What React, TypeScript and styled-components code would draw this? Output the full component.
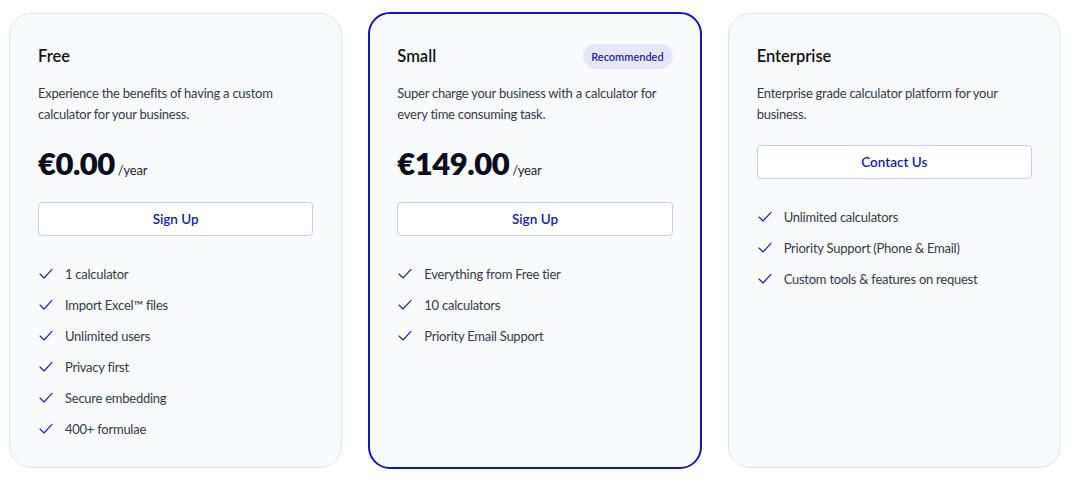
import React from "react";
import styled, { createGlobalStyle } from "styled-components";

const Global = createGlobalStyle`
  html, body { margin: 0; padding: 0; background: #ffffff; }
  body { font-family: Lato, "Noto Sans", sans-serif; -webkit-font-smoothing: antialiased; }
  * { box-sizing: border-box; }
`;

const Page = styled.div`
  width: 1070px;
  height: 478px;
  padding: 12px 9px 9px;
  display: grid;
  grid-template-columns: repeat(3, 1fr);
  gap: 26px;
  align-items: stretch;
  background: #ffffff;
`;

const Card = styled.div<{ $highlight?: boolean }>`
  display: flex;
  flex-direction: column;
  margin-top: ${(p) => (p.$highlight ? "0" : "1px")};
  margin-bottom: ${(p) => (p.$highlight ? "0" : "1px")};
  border-radius: 22px;
  background: #f9fafc;
  border: ${(p) => (p.$highlight ? "2px solid #1616b8" : "1px solid #e4e6eb")};
  padding: ${(p) => (p.$highlight ? "29px 27px 20px" : "29px 28px 20px")};
`;

const Header = styled.div`
  display: flex;
  align-items: center;
  justify-content: space-between;
  height: 27px;
`;

const Title = styled.h3`
  margin: 0;
  font-size: 16.5px;
  font-weight: 600;
  color: #111318;
  line-height: 27px;
`;

const Badge = styled.span`
  display: inline-flex;
  align-items: center;
  height: 25px;
  padding: 0 9px 0 8px;
  margin-top: -1px;
  border-radius: 999px;
  background: #e7e8f7;
  color: #1f1fa6;
  font-size: 11px;
  font-weight: 600;
`;

const Desc = styled.p`
  margin: 13px 0 0;
  font-size: 13px;
  letter-spacing: -0.25px;
  line-height: 21px;
  color: #353a45;
`;

const PriceRow = styled.div`
  margin-top: 18px;
  display: flex;
  align-items: baseline;
  gap: 3px;
  height: 40px;
`;

const Price = styled.span`
  font-size: 31px;
  font-weight: 800;
  color: #0b0c1c;
  letter-spacing: -0.5px;
  line-height: 40px;
`;

const Per = styled.span`
  font-size: 13px;
  letter-spacing: -0.2px;
  color: #22252e;
`;

const Button = styled.button<{ $gap: number }>`
  margin-top: ${(p) => p.$gap}px;
  height: 34px;
  width: 100%;
  border: 1px solid #c9cbee;
  border-radius: 4px;
  background: #ffffff;
  color: #1a1aa6;
  font-family: inherit;
  font-size: 13.5px;
  font-weight: 600;
  cursor: pointer;
`;

const Features = styled.ul`
  list-style: none;
  margin: 22px 0 0;
  padding: 0;
  display: flex;
  flex-direction: column;
`;

const Feature = styled.li`
  display: flex;
  align-items: center;
  gap: 11px;
  height: 31px;
  font-size: 13px;
  letter-spacing: -0.25px;
  color: #353a45;
`;

const CheckIcon = styled.svg`
  width: 16px;
  height: 16px;
  flex: none;
  color: #1e1eb0;
`;

const Check = () => (
  <CheckIcon viewBox="0 0 24 24" fill="none" stroke="currentColor" strokeWidth={1.7} strokeLinecap="round" strokeLinejoin="round">
    <path d="M21 5 9 18l-6-6" />
  </CheckIcon>
);

type Plan = {
  name: string;
  desc: string;
  price?: string;
  cta: string;
  features: string[];
  recommended?: boolean;
};

const plans: Plan[] = [
  {
    name: "Free",
    desc: "Experience the benefits of having a custom calculator for your business.",
    price: "€0.00",
    cta: "Sign Up",
    features: ["1 calculator", "Import Excel™ files", "Unlimited users", "Privacy first", "Secure embedding", "400+ formulae"],
  },
  {
    name: "Small",
    desc: "Super charge your business with a calculator for every time consuming task.",
    price: "€149.00",
    cta: "Sign Up",
    features: ["Everything from Free tier", "10 calculators", "Priority Email Support"],
    recommended: true,
  },
  {
    name: "Enterprise",
    desc: "Enterprise grade calculator platform for your business.",
    cta: "Contact Us",
    features: ["Unlimited calculators", "Priority Support (Phone & Email)", "Custom tools & features on request"],
  },
];

export default function App() {
  return (
    <>
      <Global />
      <Page>
        {plans.map((p) => (
          <Card key={p.name} $highlight={p.recommended}>
            <Header>
              <Title>{p.name}</Title>
              {p.recommended && <Badge>Recommended</Badge>}
            </Header>
            <Desc>{p.desc}</Desc>
            {p.price && (
              <PriceRow>
                <Price>{p.price}</Price>
                <Per>/year</Per>
              </PriceRow>
            )}
            <Button $gap={p.price ? 19 : 20}>{p.cta}</Button>
            <Features>
              {p.features.map((f) => (
                <Feature key={f}>
                  <Check />
                  {f}
                </Feature>
              ))}
            </Features>
          </Card>
        ))}
      </Page>
    </>
  );
}
